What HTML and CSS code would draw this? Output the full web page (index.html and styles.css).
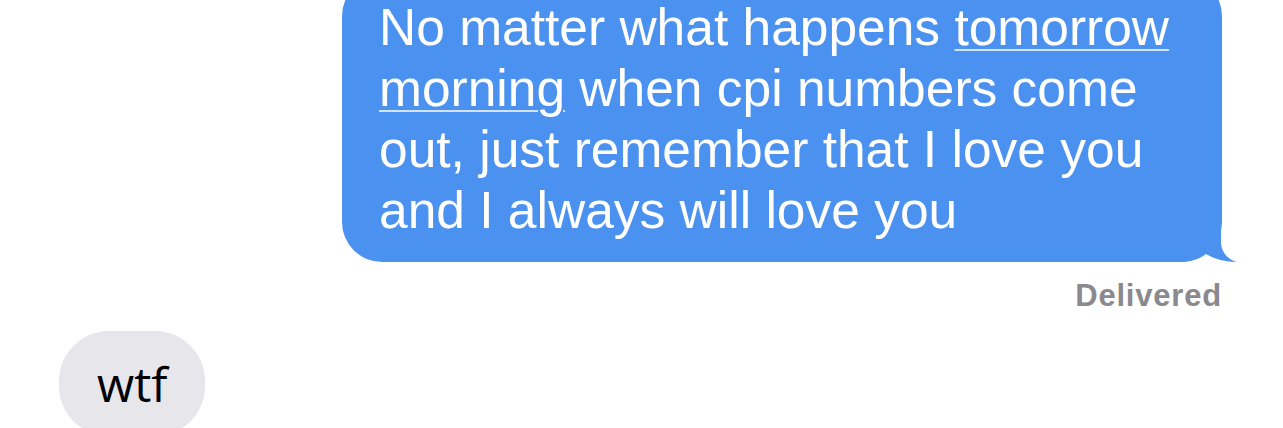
FILE: index.html
```html
<!DOCTYPE html>
<html lang="en">
<head>
    <meta charset="UTF-8">
    <meta name="viewport" content="width=device-width, initial-scale=1.0">
    <title>Messages</title>
    <link rel="stylesheet" href="styles.css">
</head>
<body>
    <div class="thread">
        <div class="row sent-row">
            <div class="bubble sent">
                No matter what happens <span class="link">tomorrow morning</span> when cpi numbers come out, just remember that I love you and I always will love you
                <svg class="tail" width="56" height="50" viewBox="0 0 56 50">
                    <path d="M0 0 L39 0 L39 30 C39 40 46 48 55 50 C42 50 28 46 20 39 C14 45 8 50 0 50 Z" fill="#4b91f0"/>
                </svg>
            </div>
        </div>
        <div class="status">Delivered</div>
        <div class="row received-row">
            <div class="bubble received">wtf</div>
        </div>
    </div>
</body>
</html>
```

FILE: styles.css
```css
body {
    margin: 0;
    background-color: #ffffff;
    font-family: 'Liberation Sans', Arial, sans-serif;
    overflow: hidden;
}
.thread {
    display: flex;
    flex-direction: column;
    margin-top: -24px;
}
.row {
    display: flex;
}
.sent-row {
    justify-content: flex-end;
    padding-right: 61px;
}
.received-row {
    justify-content: flex-start;
    padding-left: 59px;
    margin-top: 17px;
}
.bubble {
    position: relative;
    box-sizing: border-box;
}
.sent {
    width: 880px;
    padding: 21px 37px;
    background-color: #4b91f0;
    color: #ffffff;
    font-size: 51.5px;
    line-height: 61px;
    border-radius: 40px;
}
.link {
    text-decoration: underline;
    text-decoration-thickness: 2px;
    text-underline-offset: 4px;
    text-decoration-color: rgba(255, 255, 255, 0.75);
}
.tail {
    position: absolute;
    right: -16px;
    bottom: 0;
    display: block;
}
.status {
    align-self: flex-end;
    margin: 16px 61px 0 0;
    font-size: 31px;
    line-height: 36px;
    font-weight: bold;
    letter-spacing: 0.8px;
    color: #8a8a8e;
}
.received {
    padding: 20px 38px;
    background-color: #e6e6eb;
    color: #000000;
    font-family: 'Open Sans', sans-serif;
    font-size: 48px;
    border-radius: 50px;
}
```
